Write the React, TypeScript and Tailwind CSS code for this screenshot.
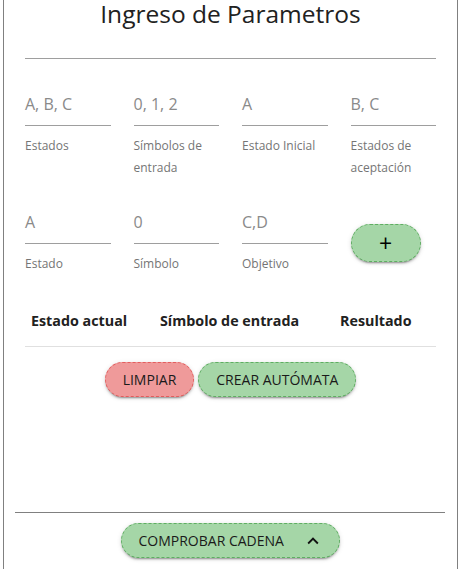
import React from "react";

const shadow =
  "shadow-[0_3px_1px_-2px_rgba(0,0,0,0.2),0_2px_2px_0_rgba(0,0,0,0.14),0_1px_5px_0_rgba(0,0,0,0.12)]";

function Field({ value, label }: { value: string; label: string }) {
  return (
    <div className="flex flex-col">
      <div className="text-[16px] leading-[24px] text-[#8a8a8a] border-b border-[#9e9e9e] pb-[9px]">{value}</div>
      <div className="mt-[9px] text-[12px] leading-[22px] text-[#757575]">{label}</div>
    </div>
  );
}

export default function App() {
  return (
    <div className="min-h-[569px] ml-[3px] border-x border-[#808080] flex flex-col font-['Open_Sans',sans-serif] bg-white">
      <div className="px-[21px]">
        <h1 className="text-center text-[24.5px] leading-[28px] text-[#212121] font-normal">Ingreso de Parametros</h1>
        <div className="mt-[30px] h-px bg-[#9e9e9e]" />
        <div className="mt-[33px] grid grid-cols-4 gap-x-[23px]">
          <Field value="A, B, C" label="Estados" />
          <Field value="0, 1, 2" label="Símbolos de entrada" />
          <Field value="A" label="Estado Inicial" />
          <Field value="B, C" label="Estados de aceptación" />
        </div>
        <div className="mt-[31px] grid grid-cols-4 gap-x-[23px]">
          <Field value="A" label="Estado" />
          <Field value="0" label="Símbolo" />
          <Field value="C,D" label="Objetivo" />
          <div>
            <button
              className={
                "mt-[14px] w-[70px] h-[38px] rounded-full bg-[#a5d6a7] border border-dashed border-[#5fae62] flex items-center justify-center text-[23px] leading-none text-black " +
                shadow
              }
            >
              +
            </button>
          </div>
        </div>
        <div className="mt-[34px] grid grid-cols-[129px_180px_101px] border-b border-[#e0e0e0]">
          <div className="pl-[6px] pb-[13px] text-[14.3px] leading-[24px] font-bold text-[#212121]">Estado actual</div>
          <div className="pl-[6px] pb-[13px] text-[14.3px] leading-[24px] font-bold text-[#212121]">Símbolo de entrada</div>
          <div className="pl-[6px] pb-[13px] text-[14.3px] leading-[24px] font-bold text-[#212121]">Resultado</div>
        </div>
        <div className="mt-[15px] flex justify-center gap-[4px]">
          <button
            className={
              "h-[35px] px-[17px] rounded-full bg-[#ef9a9a] border border-dashed border-[#e35d5d] text-[14px] text-[#1a1a1a] uppercase " +
              shadow
            }
          >
            Limpiar
          </button>
          <button
            className={
              "h-[35px] px-[17px] rounded-full bg-[#a5d6a7] border border-dashed border-[#5fae62] text-[14px] text-[#1a1a1a] uppercase " +
              shadow
            }
          >
            Crear autómata
          </button>
        </div>
      </div>
      <div className="mt-auto ml-[11px] mr-[12px] pb-[11px]">
        <div className="h-px bg-[#808080]" />
        <div className="mt-[10px] flex justify-center">
          <button
            className={
              "h-[35px] w-[219px] pl-[17px] pr-[15px] rounded-full bg-[#a5d6a7] border border-dashed border-[#5fae62] text-[14px] text-[#1a1a1a] flex items-center justify-between " +
              shadow
            }
          >
            <span>COMPROBAR CADENA</span>
            <svg width="22" height="22" viewBox="0 0 24 24" fill="#111">
              <path d="M12 8l-6 6 1.41 1.41L12 10.83l4.59 4.58L18 14z" />
            </svg>
          </button>
        </div>
      </div>
    </div>
  );
}
